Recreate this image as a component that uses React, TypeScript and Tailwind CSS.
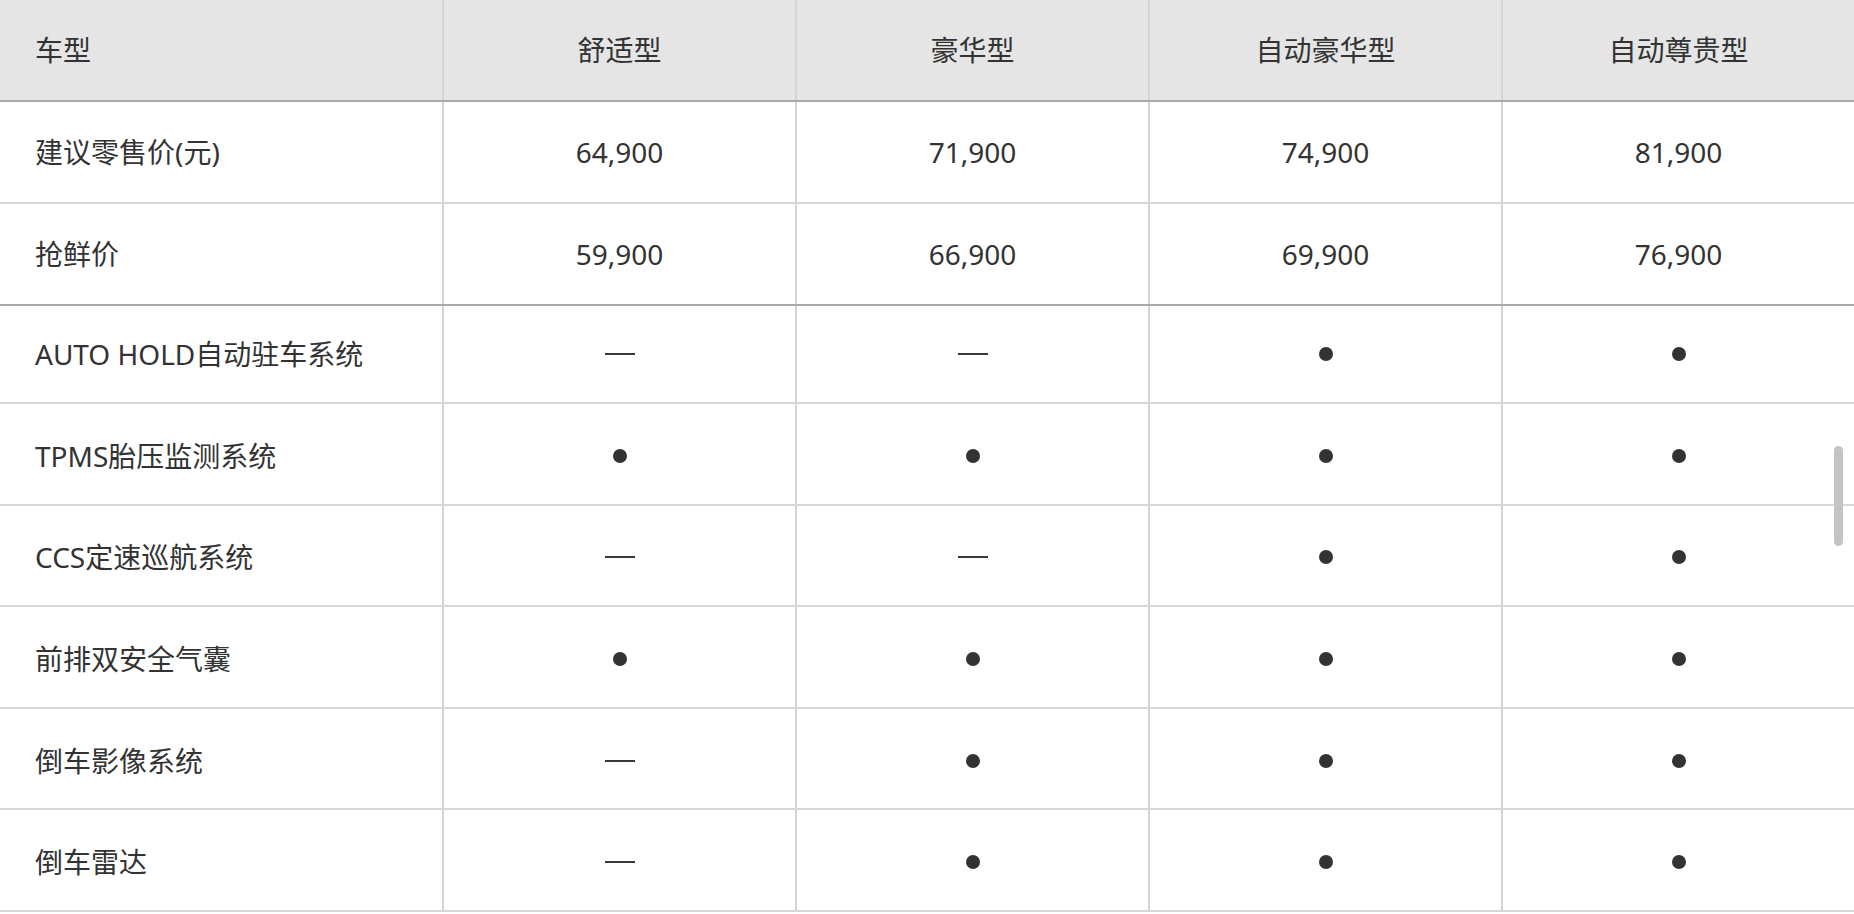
import React from "react";

type Mark = "dot" | "dash";

const headers = ["舒适型", "豪华型", "自动豪华型", "自动尊贵型"];

const priceRows: { label: string; values: string[] }[] = [
  { label: "建议零售价(元)", values: ["64,900", "71,900", "74,900", "81,900"] },
  { label: "抢鲜价", values: ["59,900", "66,900", "69,900", "76,900"] },
];

const featureRows: { label: string; values: Mark[] }[] = [
  { label: "AUTO HOLD自动驻车系统", values: ["dash", "dash", "dot", "dot"] },
  { label: "TPMS胎压监测系统", values: ["dot", "dot", "dot", "dot"] },
  { label: "CCS定速巡航系统", values: ["dash", "dash", "dot", "dot"] },
  { label: "前排双安全气囊", values: ["dot", "dot", "dot", "dot"] },
  { label: "倒车影像系统", values: ["dash", "dot", "dot", "dot"] },
  { label: "倒车雷达", values: ["dash", "dot", "dot", "dot"] },
];

const font = { fontFamily: "'Noto Sans', 'Noto Sans CJK SC', sans-serif" };

function MarkCell({ m }: { m: Mark }) {
  if (m === "dot") return <span className="block w-[14px] h-[14px] rounded-full bg-[#333333]" />;
  return <span className="block w-[30px] h-[2px] bg-[#3a3a3a]" />;
}

export default function App() {
  const grid = "grid grid-cols-[444px_353px_353px_353px_1fr]";
  return (
    <div className="relative w-[1854px] h-[914px] overflow-hidden bg-white text-[#333333] text-[28px]" style={font}>
      {/* header */}
      <div className={`${grid} h-[102px] bg-[#e5e5e5] border-b-2 border-[#aaaaaa]`}>
        <div className="flex items-center pl-[35px] border-r-2 border-[#d4d4d4]">车型</div>
        {headers.map((h, i) => (
          <div key={h} className={`flex items-center justify-center ${i < 3 ? "border-r-2 border-[#d4d4d4]" : ""}`}>
            {h}
          </div>
        ))}
      </div>
      {priceRows.map((r, ri) => (
        <div
          key={r.label}
          className={`${grid} h-[102px] border-b-2 ${ri === 1 ? "border-[#aaaaaa]" : "border-[#d8d8d8]"}`}
        >
          <div className="flex items-center pl-[35px] border-r-2 border-[#d4d4d4]">{r.label}</div>
          {r.values.map((v, i) => (
            <div key={i} className={`flex items-center justify-center ${i < 3 ? "border-r-2 border-[#d4d4d4]" : ""}`}>
              {v}
            </div>
          ))}
        </div>
      ))}
      {featureRows.map((r, ri) => {
        const pad = ri === 0 ? "" : "pt-[4px]";
        return (
          <div
            key={r.label}
            className={`${grid} ${ri === 0 ? "h-[98px]" : "h-[101.6px]"} border-b-2 border-[#d8d8d8]`}
          >
            <div className={`flex items-center pl-[35px] ${pad} border-r-2 border-[#d4d4d4]`}>{r.label}</div>
            {r.values.map((v, i) => (
              <div
                key={i}
                className={`flex items-center justify-center ${pad} ${i < 3 ? "border-r-2 border-[#d4d4d4]" : ""}`}
              >
                <MarkCell m={v} />
              </div>
            ))}
          </div>
        );
      })}
      {/* overlay scrollbar */}
      <div className="absolute left-[1834px] top-[446px] w-[9px] h-[100px] rounded-full bg-[#c4c4c4]" />
    </div>
  );
}
